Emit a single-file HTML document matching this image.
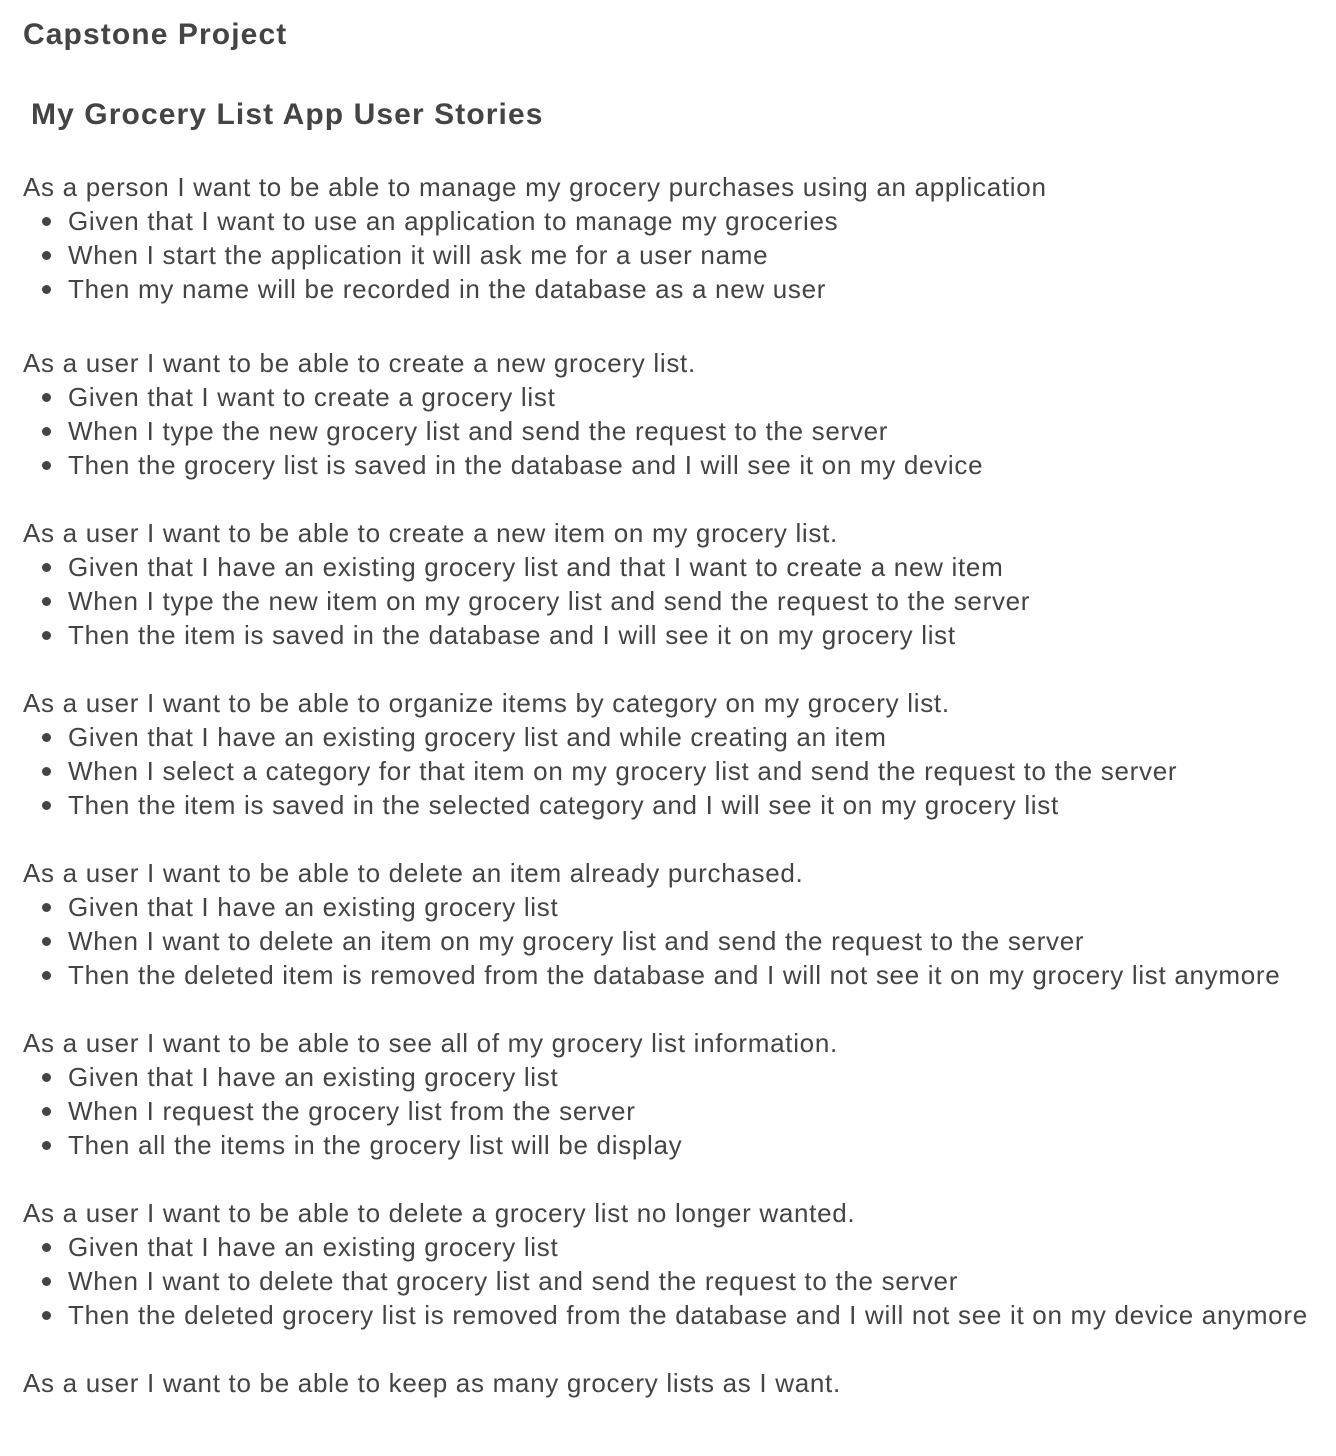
<!DOCTYPE html>
<html><head><meta charset="utf-8"><style>
body{margin:0;background:#fff;width:1336px;height:1456px;position:relative;font-family:"Liberation Sans",sans-serif;color:#444;}
.l{position:absolute;left:23px;height:34px;line-height:34px;font-size:26px;letter-spacing:0.7px;white-space:nowrap;}
.b{left:68px;}
.b:before{content:"";position:absolute;left:-26px;top:13px;width:9px;height:9px;border-radius:50%;background:#444;}
.h{position:absolute;font-weight:bold;font-size:30px;letter-spacing:1.1px;line-height:40px;white-space:nowrap;}
</style></head><body>
<div class="h" style="left:23px;top:15px">Capstone Project</div>
<div class="h" style="left:31px;top:95px">My Grocery List App User Stories</div>

<div class="l" style="top:170px">As a person I want to be able to manage my grocery purchases using an application</div>
<div class="l b" style="top:204px">Given that I want to use an application to manage my groceries</div>
<div class="l b" style="top:238px">When I start the application it will ask me for a user name</div>
<div class="l b" style="top:272px">Then my name will be recorded in the database as a new user</div>

<div class="l" style="top:346px">As a user I want to be able to create a new grocery list.</div>
<div class="l b" style="top:380px">Given that I want to create a grocery list</div>
<div class="l b" style="top:414px">When I type the new grocery list and send the request to the server</div>
<div class="l b" style="top:448px">Then the grocery list is saved in the database and I will see it on my device</div>

<div class="l" style="top:516px">As a user I want to be able to create a new item on my grocery list.</div>
<div class="l b" style="top:550px">Given that I have an existing grocery list and that I want to create a new item</div>
<div class="l b" style="top:584px">When I type the new item on my grocery list and send the request to the server</div>
<div class="l b" style="top:618px">Then the item is saved in the database and I will see it on my grocery list</div>

<div class="l" style="top:686px">As a user I want to be able to organize items by category on my grocery list.</div>
<div class="l b" style="top:720px">Given that I have an existing grocery list and while creating an item</div>
<div class="l b" style="top:754px">When I select a category for that item on my grocery list and send the request to the server</div>
<div class="l b" style="top:788px">Then the item is saved in the selected category and I will see it on my grocery list</div>

<div class="l" style="top:856px">As a user I want to be able to delete an item already purchased.</div>
<div class="l b" style="top:890px">Given that I have an existing grocery list</div>
<div class="l b" style="top:924px">When I want to delete an item on my grocery list and send the request to the server</div>
<div class="l b" style="top:958px">Then the deleted item is removed from the database and I will not see it on my grocery list anymore</div>

<div class="l" style="top:1026px">As a user I want to be able to see all of my grocery list information.</div>
<div class="l b" style="top:1060px">Given that I have an existing grocery list</div>
<div class="l b" style="top:1094px">When I request the grocery list from the server</div>
<div class="l b" style="top:1128px">Then all the items in the grocery list will be display</div>

<div class="l" style="top:1196px">As a user I want to be able to delete a grocery list no longer wanted.</div>
<div class="l b" style="top:1230px">Given that I have an existing grocery list</div>
<div class="l b" style="top:1264px">When I want to delete that grocery list and send the request to the server</div>
<div class="l b" style="top:1298px">Then the deleted grocery list is removed from the database and I will not see it on my device anymore</div>

<div class="l" style="top:1366px">As a user I want to be able to keep as many grocery lists as I want.</div>
</body></html>
